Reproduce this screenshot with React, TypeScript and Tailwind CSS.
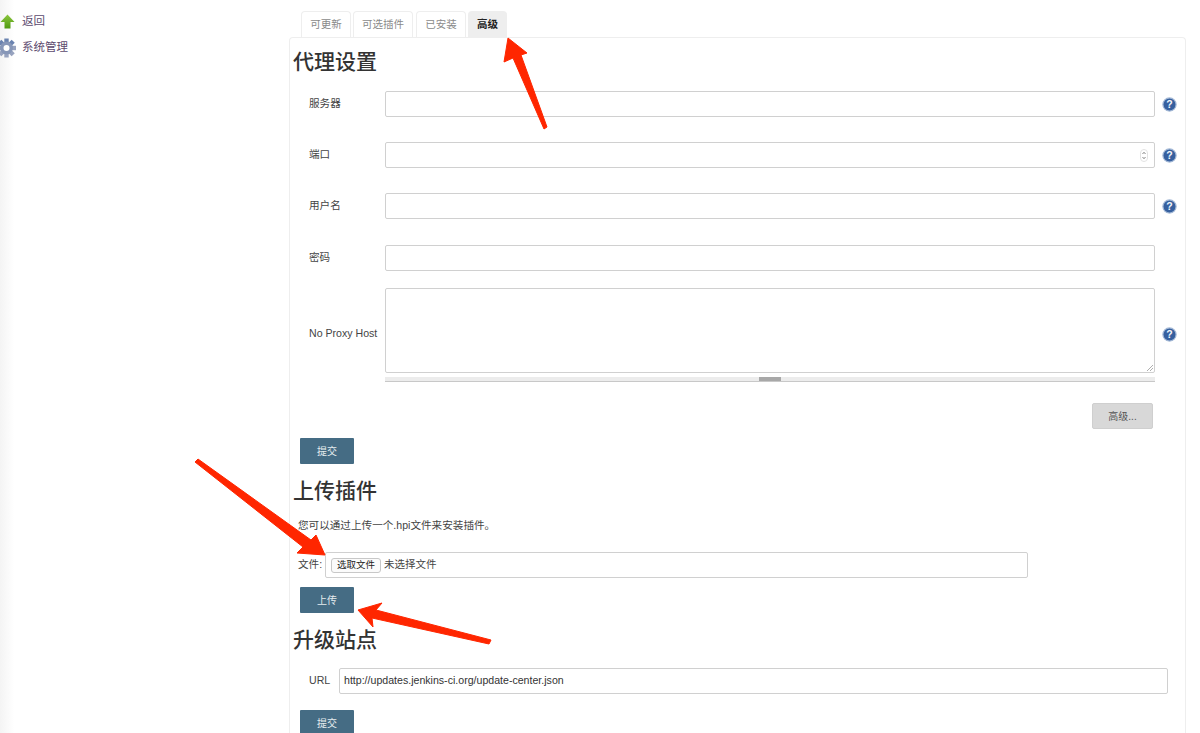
const font = { fontFamily: '"Liberation Sans","Noto Sans CJK SC",Arial,sans-serif' };

function Help() {
  return (
    <svg width="15" height="15" viewBox="0 0 15 15" className="shrink-0">
      <circle cx="7.5" cy="7.5" r="6.6" fill="#36609f" stroke="#a3b8d6" strokeWidth="1.2" />
      <text x="7.5" y="11.2" textAnchor="middle" fontSize="10.5" fontWeight="700" fill="#f4f7fb" fontFamily="Liberation Sans">?</text>
    </svg>
  );
}

function Gear() {
  const teeth = [0, 45, 90, 135, 180, 225, 270, 315];
  return (
    <svg width="18" height="20" viewBox="0 0 18 20" className="shrink-0">
      <g transform="translate(7.5 10)">
        {teeth.map((a) => (
          <rect key={a} x="-2.2" y="-9.5" width="4.4" height="5" fill={a < 90 || a > 270 ? "#6a83b0" : "#98a3bf"} transform={`rotate(${a})`} />
        ))}
        <circle r="6.5" fill="#8797b8" />
        <circle r="3" fill="#fff" />
      </g>
    </svg>
  );
}

function UpArrow() {
  return (
    <svg width="15" height="15" viewBox="0 0 15 15" className="shrink-0">
      <defs>
        <linearGradient id="ga" x1="0" y1="0" x2="0" y2="1">
          <stop offset="0%" stopColor="#8cc63f" />
          <stop offset="100%" stopColor="#4f9a10" />
        </linearGradient>
      </defs>
      <path d="M7.5 0.5 L14.5 8 L10.5 8 L10.5 14.5 L4.5 14.5 L4.5 8 L0.5 8 Z" fill="url(#ga)" />
    </svg>
  );
}

function Tab({ label, active, className }: { label: string; active?: boolean; className: string }) {
  return (
    <div
      className={
        active
          ? `h-[26px] ${className} flex items-center justify-center rounded-t border border-b-0 border-[#eeeeee] bg-[#eeeeee] text-[10.5px] font-bold text-[#222222]`
          : `h-[26px] ${className} flex items-center justify-center rounded-t border border-b-0 border-[#eeeeee] bg-white text-[10.5px] text-[#8a8a8a]`
      }
    >
      {label}
    </div>
  );
}

function Row({ label, help, tall, spin, mb }: { label: string; help?: boolean; tall?: boolean; spin?: boolean; mb: string }) {
  return (
    <div className={`flex items-center ${mb}`}>
      <div className={`w-[76px] shrink-0 text-[10.6px] text-[#444444] whitespace-nowrap ${tall ? "pt-[7px]" : ""}`}>{label}</div>
      <div className={`relative w-[770px] shrink-0 bg-white border border-[#d0d0d0] rounded-[2px] ${tall ? "h-[85px]" : "h-[26px]"}`}>
        {spin && (
          <svg width="8" height="13" viewBox="0 0 8 13" className="absolute right-[6px] top-[6px]">
            <rect x="0.5" y="0.5" width="7" height="12" rx="3.5" fill="#fff" stroke="#e2e2e2" />
            <path d="M2.5 5 L4 3.3 L5.5 5 M2.5 8 L4 9.7 L5.5 8" fill="none" stroke="#666666" strokeWidth="0.8" />
          </svg>
        )}
        {tall && (
          <svg width="8" height="8" viewBox="0 0 8 8" className="absolute right-0 bottom-0">
            <path d="M1 7 L7 1 M4 7 L7 4" stroke="#999999" strokeWidth="0.8" />
          </svg>
        )}
      </div>
      {help && <div className={`ml-[7px] ${tall ? "pt-[7px]" : ""}`}><Help /></div>}
    </div>
  );
}

function Submit({ label, className }: { label: string; className?: string }) {
  return (
    <div className={`w-[54px] h-[26px] rounded-[1px] bg-[#456c84] text-[#e6ecef] text-[10px] flex items-center justify-center ${className ?? ""}`}>
      {label}
    </div>
  );
}

export default function App() {
  return (
    <div className="relative w-[1200px] h-[733px] overflow-hidden bg-white flex" style={font}>
      <aside className="w-[289px] shrink-0 pt-[14px] bg-gradient-to-r from-[#f4f4f4] from-0% to-white to-[5%]">
        <div className="flex items-center h-[15px] text-[11.5px] text-[#5c4a6e]">
          <UpArrow />
          <span className="ml-[7px]">返回</span>
        </div>
        <div className="flex items-center h-[20px] mt-[9px] text-[11.5px] text-[#5c4a6e] ml-[-1px]">
          <Gear />
          <span className="ml-[5px]">系统管理</span>
        </div>
      </aside>
      <main className="w-[897px] shrink-0">
        <div className="h-[11px]" />
        <div className="flex gap-[2px] pl-[12px] h-[26px]">
          <Tab label="可更新" className="w-[50px]" />
          <Tab label="可选插件" className="w-[60px]" />
          <Tab label="已安装" className="w-[50px] ml-[1px]" />
          <Tab label="高级" active className="w-[39px]" />
        </div>
        <div className="h-[760px] border border-b-0 border-[#eeeeee] rounded-t pl-[3px]">
          <h2 className="h-[53px] pt-[9px] text-[21px] leading-[30px] font-medium text-[#333333]">代理设置</h2>
          <div className="pl-[16px]">
            <Row label="服务器" help mb="mb-[25px]" />
            <Row label="端口" help spin mb="mb-[25px]" />
            <Row label="用户名" help mb="mb-[26px]" />
            <Row label="密码" mb="mb-[17px]" />
            <Row label="No Proxy Host" help tall mb="mb-[4px]" />
            <div className="ml-[76px] w-[770px] h-[5px] bg-[#ececec] border-b border-[#c8c8c8] flex justify-center">
              <div className="w-[22px] h-[4px] bg-[#a8a8a8]" />
            </div>
            <div className="flex justify-end w-[844px] mt-[21px]">
              <div className="w-[61px] h-[26px] bg-[#d8d8d8] border border-[#cfcfcf] rounded-[2px] text-[10px] text-[#555555] flex items-center justify-center">高级...</div>
            </div>
          </div>
          <div className="pl-[7px]">
            <Submit label="提交" className="mt-[9px]" />
          </div>
          <h2 className="mt-[12px] h-[30px] text-[21px] leading-[30px] font-medium text-[#333333]">上传插件</h2>
          <p className="mt-[11px] pl-[5px] text-[10.6px] leading-[16px] text-[#444444]">您可以通过上传一个.hpi文件来安装插件。</p>
          <div className="flex items-center mt-[19px] pl-[5px]">
            <span className="w-[27px] text-[10.6px] text-[#444444] whitespace-nowrap">文件:</span>
            <div className="w-[703px] h-[26px] border border-[#d0d0d0] rounded-[2px] flex items-center pl-[5px]">
              <div className="w-[50px] h-[15px] border border-[#c8c8c8] rounded-[3px] bg-[#fbfbfb] text-[9.5px] text-[#222222] flex items-center justify-center">选取文件</div>
              <span className="ml-[3px] text-[10.5px] text-[#444444]">未选择文件</span>
            </div>
          </div>
          <div className="pl-[7px]">
            <Submit label="上传" className="mt-[9px]" />
          </div>
          <h2 className="mt-[12px] h-[30px] text-[21px] leading-[30px] font-medium text-[#333333]">升级站点</h2>
          <div className="flex items-center mt-[13px] pl-[16px]">
            <span className="w-[30px] text-[10.6px] text-[#444444]">URL</span>
            <div className="w-[829px] h-[26px] border border-[#d0d0d0] rounded-[2px] flex items-center pl-[4px] text-[10.6px] text-[#333333]">
              http://updates.jenkins-ci.org/update-center.json
            </div>
          </div>
          <div className="pl-[7px]">
            <Submit label="提交" className="mt-[16px]" />
          </div>
        </div>
      </main>
      <svg className="absolute inset-0 pointer-events-none" width="1200" height="733" viewBox="0 0 1200 733">
        <g fill="#ff2600" stroke="#ff2600" strokeWidth="1" strokeLinejoin="round">
          <polygon points="508,38 527,53 521,55 547,127 544,129 513,58 504,62" />
          <polygon points="325,555 316,535 311,540 198,459 195,462 303,547 297,553" />
          <polygon points="358,610 382,603 376,610 491,640 489,644 372,618 373,627" />
        </g>
      </svg>
    </div>
  );
}
